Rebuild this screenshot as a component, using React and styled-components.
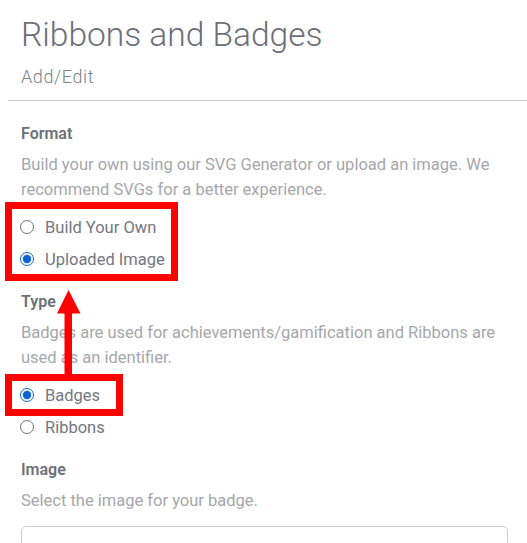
import React from "react";
import styled, { createGlobalStyle } from "styled-components";

const GlobalStyle = createGlobalStyle`
  html, body {
    margin: 0;
    padding: 0;
    background: #ffffff;
    overflow: hidden;
  }
  body {
    font-family: Roboto, "Liberation Sans", Arial, sans-serif;
  }
`;

const Page = styled.div`
  position: relative;
  width: 527px;
  height: 543px;
  padding-top: 15px;
  box-sizing: border-box;
  overflow: hidden;
`;

const Header = styled.header`
  padding-left: 21px;
`;

const Title = styled.h1`
  margin: 0;
  font-size: 33.5px;
  line-height: 40px;
  font-weight: 300;
  color: #6b6f7a;
`;

const Subtitle = styled.div`
  margin-top: 10px;
  font-size: 18px;
  line-height: 24px;
  font-weight: 300;
  letter-spacing: 0.6px;
  color: #7c808a;
`;

const Divider = styled.hr`
  margin: 11px 0 0 8px;
  border: 0;
  border-top: 1px solid #c6c6cb;
`;

const Form = styled.div`
  padding: 22px 19px 0 21px;
`;

const Section = styled.section`
  & + & {
    margin-top: 16px;
  }
`;

const Label = styled.div`
  font-size: 16px;
  line-height: 22px;
  font-weight: 600;
  color: #6c7079;
`;

const Help = styled.p`
  margin: 7px 0 0;
  font-size: 16.5px;
  line-height: 25px;
  color: #a4a7ad;
`;

const Options = styled.div`
  margin-top: 9px;
  display: flex;
  flex-direction: column;
`;

const Option = styled.label`
  display: flex;
  align-items: center;
  height: 32px;
  font-size: 16.5px;
  color: #737782;
`;

const Radio = styled.input.attrs({ type: "radio" })`
  width: 14px;
  height: 14px;
  margin: 0 11px 0 -1px;
  accent-color: #0b63d6;
`;

const FileBox = styled.div`
  margin-top: 13px;
  height: 44px;
  border: 1px solid #cfcfd2;
  border-radius: 5px;
`;

const Highlight = styled.div`
  position: absolute;
  left: ${(p) => p.$x}px;
  top: ${(p) => p.$y}px;
  width: ${(p) => p.$w}px;
  height: ${(p) => p.$h}px;
  border: 7px solid #ff0000;
  box-sizing: border-box;
  pointer-events: none;
`;

const ArrowLayer = styled.svg`
  position: absolute;
  left: 0;
  top: 0;
  pointer-events: none;
`;

export default function App() {
  return (
    <>
      <GlobalStyle />
      <Page>
        <Header>
          <Title>Ribbons and Badges</Title>
          <Subtitle>Add/Edit</Subtitle>
        </Header>
        <Divider />
        <Form>
          <Section>
            <Label>Format</Label>
            <Help>
              Build your own using our SVG Generator or upload an image. We
              recommend SVGs for a better experience.
            </Help>
            <Options>
              <Option>
                <Radio name="format" />
                Build Your Own
              </Option>
              <Option>
                <Radio name="format" defaultChecked />
                Uploaded Image
              </Option>
            </Options>
          </Section>
          <Section>
            <Label>Type</Label>
            <Help>
              Badges are used for achievements/gamification and Ribbons are
              used as an identifier.
            </Help>
            <Options>
              <Option>
                <Radio name="type" defaultChecked />
                Badges
              </Option>
              <Option>
                <Radio name="type" />
                Ribbons
              </Option>
            </Options>
          </Section>
          <Section>
            <Label>Image</Label>
            <Help>Select the image for your badge.</Help>
            <FileBox />
          </Section>
        </Form>

        <Highlight $x={5} $y={202} $w={173} $h={79} />
        <Highlight $x={5} $y={374} $w={118} $h={42} />
        <ArrowLayer width="527" height="543">
          <rect x="64.5" y="312" width="7.5" height="63" fill="#ff0000" />
          <polygon points="68.5,290 57,313.5 80.5,313.5" fill="#ff0000" />
        </ArrowLayer>
      </Page>
    </>
  );
}
